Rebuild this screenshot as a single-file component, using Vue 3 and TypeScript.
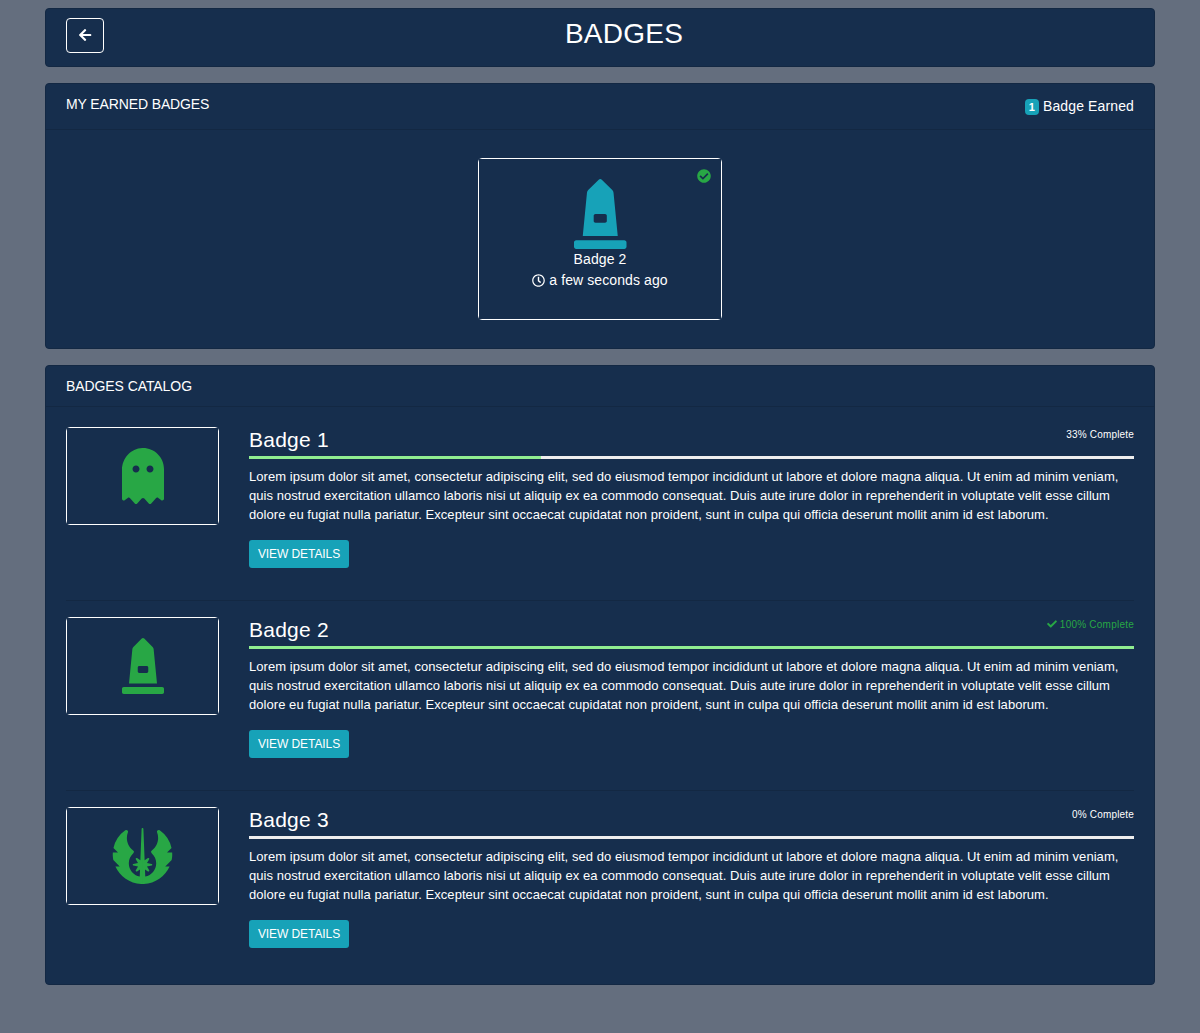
<script setup lang="ts">
interface Icon {
  width: number
  path: string
  mirrored?: boolean
}

interface Badge {
  name: string
  icon: Icon
  progress: number
}

const icons: Record<string, Icon> = {
  arrowLeft: {
    width: 448,
    path: 'M257.5 445.1l-22.2 22.2c-9.4 9.4-24.6 9.4-33.9 0L7 273c-9.4-9.4-9.4-24.6 0-33.9L201.4 44.7c9.4-9.4 24.6-9.4 33.9 0l22.2 22.2c9.5 9.5 9.3 25-.4 34.3L136.6 216H424c13.3 0 24 10.7 24 24v32c0 13.3-10.7 24-24 24H136.6l120.5 114.8c9.8 9.3 10 24.8.4 34.3z',
  },
  checkCircle: {
    width: 512,
    path: 'M504 256c0 136.967-111.033 248-248 248S8 392.967 8 256 119.033 8 256 8s248 111.033 248 248zM227.314 387.314l184-184c6.248-6.248 6.248-16.379 0-22.627l-22.627-22.627c-6.248-6.249-16.379-6.249-22.628 0L216 308.118l-70.059-70.059c-6.248-6.248-16.379-6.248-22.628 0l-22.627 22.627c-6.248 6.248-6.248 16.379 0 22.627l104 104c6.249 6.249 16.379 6.249 22.628.001z',
  },
  clock: {
    width: 512,
    path: 'M256 8C119 8 8 119 8 256s111 248 248 248 248-111 248-248S393 8 256 8zm0 448c-110.5 0-200-89.5-200-200S145.5 56 256 56s200 89.5 200 200-89.5 200-200 200zm61.8-104.4l-84.9-61.7c-3.1-2.3-4.9-5.9-4.9-9.7V116c0-6.6 5.4-12 12-12h32c6.6 0 12 5.4 12 12v141.7l66.8 48.6c5.4 3.9 6.5 11.4 2.6 16.8L334.6 349c-3.9 5.3-11.4 6.5-16.8 2.6z',
  },
  check: {
    width: 512,
    path: 'M173.898 439.404l-166.4-166.4c-9.997-9.997-9.997-26.206 0-36.204l36.203-36.204c9.997-9.998 26.207-9.998 36.204 0L192 312.69 432.095 72.596c9.997-9.997 26.207-9.997 36.204 0l36.203 36.204c9.997 9.997 9.997 26.206 0 36.204l-294.4 294.401c-9.998 9.997-26.207 9.997-36.204-.001z',
  },
  ghost: {
    width: 384,
    path: 'M186.1.09C81.01 3.24 0 94.92 0 200.05v263.92c0 14.26 17.23 21.39 27.31 11.31l24.92-18.53c6.66-4.95 16-3.99 21.51 2.21l42.95 48.35c6.25 6.25 16.38 6.25 22.63 0l40.72-45.85c6.37-7.17 17.56-7.17 23.92 0l40.72 45.85c6.25 6.25 16.38 6.25 22.63 0l42.95-48.35c5.51-6.2 14.85-7.17 21.51-2.21l24.92 18.53c10.08 10.08 27.31 2.94 27.31-11.31V192C384 84 294.83-3.17 186.1.09zM128 224c-17.67 0-32-14.33-32-32s14.33-32 32-32 32 14.33 32 32-14.33 32-32 32zm128 0c-17.67 0-32-14.33-32-32s14.33-32 32-32 32 14.33 32 32-14.33 32-32 32z',
  },
  monument: {
    width: 384,
    path: 'M368 448H16c-8.84 0-16 7.16-16 16v32c0 8.84 7.16 16 16 16h352c8.84 0 16-7.16 16-16v-32c0-8.84-7.16-16-16-16zm-78.86-347.26a31.97 31.97 0 0 0-9.21-19.44L203.31 4.69c-6.25-6.25-16.38-6.25-22.63 0l-76.6 76.61a31.97 31.97 0 0 0-9.21 19.44L64 416h256l-30.86-315.26zM240 307.2c0 6.4-6.4 12.8-12.8 12.8h-70.4c-6.4 0-12.8-6.4-12.8-12.8v-38.4c0-6.4 6.4-12.8 12.8-12.8h70.4c6.4 0 12.8 6.4 12.8 12.8v38.4z',
  },
  // Left half only; the right half is its reflection.
  jedi: {
    width: 576,
    mirrored: true,
    path: 'M292 512H288q-6.4 0-12.88-.3C171.16 506.94 81.26 442.23 40.01 352h39.93l-58.61-58.6a264.8 264.8 0 0 1-5.11-39.42 273.7 273.7 0 0 1 .5-29.98h47.22L22.55 182.63A269.8 269.8 0 0 1 130.51 20.55a16.06 16.06 0 0 1 9.28-3 16.36 16.36 0 0 1 13.5 7.25 16.03 16.03 0 0 1 1.63 15.09 138.4 138.4 0 0 0-9.84 51.27c0 45.1 21.04 86.57 57.72 113.73a16.3 16.3 0 0 1 1.2 25.39c-26.55 23.98-41.17 56.5-41.17 91.58 0 60.03 42.95 110.28 99.89 121.92l2.5-65.27L238.06 397a8.34 8.34 0 0 1-10-.75 8.02 8.02 0 0 1-1.39-9.94l20.12-33.76-42.06-8.73a7.99 7.99 0 0 1 0-15.66l42.06-8.72-20.11-33.73a7.99 7.99 0 0 1 11.36-10.72l30.4 20.65L279.95 7.67A7.97 7.97 0 0 1 288 0L292 2z',
  },
}

const description =
  'Lorem ipsum dolor sit amet, consectetur adipiscing elit, sed do eiusmod tempor incididunt ut labore et dolore magna aliqua. Ut enim ad minim veniam, quis nostrud exercitation ullamco laboris nisi ut aliquip ex ea commodo consequat. Duis aute irure dolor in reprehenderit in voluptate velit esse cillum dolore eu fugiat nulla pariatur. Excepteur sint occaecat cupidatat non proident, sunt in culpa qui officia deserunt mollit anim id est laborum.'

const badges: Badge[] = [
  { name: 'Badge 1', icon: icons.ghost, progress: 33 },
  { name: 'Badge 2', icon: icons.monument, progress: 100 },
  { name: 'Badge 3', icon: icons.jedi, progress: 0 },
]
</script>

<template>
  <main class="container">
    <header class="card title-bar">
      <button class="back" type="button" aria-label="Back">
        <svg class="icon" viewBox="0 0 448 512"><path :d="icons.arrowLeft.path" /></svg>
      </button>
      <h1>BADGES</h1>
    </header>

    <section class="card">
      <div class="card-header earned-header">
        <span>MY EARNED BADGES</span>
        <span class="count"><b class="pill">1</b>Badge Earned</span>
      </div>
      <div class="earned-body">
        <div class="earned-badge frame">
          <svg class="icon earned-check" viewBox="0 0 512 512"><path :d="icons.checkCircle.path" /></svg>
          <svg class="icon earned-icon" viewBox="0 0 384 512"><path :d="icons.monument.path" /></svg>
          <div>Badge 2</div>
          <div>
            <svg class="icon clock" viewBox="0 0 512 512"><path :d="icons.clock.path" /></svg> a few seconds ago
          </div>
        </div>
      </div>
    </section>

    <section class="card">
      <div class="card-header catalog-header">BADGES CATALOG</div>
      <div class="catalog">
        <article v-for="badge in badges" :key="badge.name" class="row">
          <div class="thumb frame">
            <svg class="icon" :viewBox="`0 0 ${badge.icon.width} 512`">
              <path :d="badge.icon.path" />
              <path v-if="badge.icon.mirrored" :d="badge.icon.path" transform="matrix(-1 0 0 1 576 0)" />
            </svg>
          </div>
          <div class="details">
            <div class="heading">
              <h2>{{ badge.name }}</h2>
              <span class="status" :class="{ done: badge.progress === 100 }">
                <svg v-if="badge.progress === 100" class="icon" viewBox="0 0 512 512"><path :d="icons.check.path" /></svg>
                {{ badge.progress }}% Complete
              </span>
            </div>
            <div class="progress"><div class="bar" :style="{ width: badge.progress + '%' }"></div></div>
            <p>{{ description }}</p>
            <button class="view" type="button">VIEW DETAILS</button>
          </div>
        </article>
      </div>
    </section>
  </main>
</template>

<style>
body {
  margin: 0;
  background: #646e7e;
}
</style>

<style scoped>
* {
  box-sizing: border-box;
}

.container {
  width: 1110px;
  margin: 0 auto;
  padding-top: 8px;
  color: #fff;
  font: 14px/21px "Liberation Sans", Arial, sans-serif;
}

.card {
  margin-bottom: 16px;
  background: #162e4d;
  border: 1px solid #132843;
  border-radius: 4px;
}

.icon {
  height: 1em;
  fill: currentColor;
  overflow: visible;
}

.title-bar {
  display: flex;
  height: 59px;
  padding: 9px 20px;
}

.back {
  display: flex;
  align-items: center;
  justify-content: center;
  width: 38px;
  height: 35px;
  padding: 0 0 2px;
  color: #fff;
  font-size: 14px;
  background: transparent;
  border: 1px solid #fff;
  border-radius: 4px;
}

h1 {
  flex: 1;
  margin: 0;
  padding-left: 10px;
  font-size: 28px;
  font-weight: 400;
  line-height: 32px;
  letter-spacing: 0.25px;
  text-align: center;
}

.card-header {
  height: 41px;
  padding: 10px 20px 9px;
  border-bottom: 1px solid #132843;
}

.catalog-header {
  letter-spacing: -0.08px;
}

.earned-header {
  display: flex;
  justify-content: space-between;
  height: 46px;
  letter-spacing: -0.12px;
}

.count {
  display: flex;
  gap: 4px;
  padding-top: 2px;
  letter-spacing: 0.13px;
}

.pill {
  width: 14px;
  height: 16px;
  margin-top: 3px;
  font-size: 11px;
  line-height: 17px;
  letter-spacing: 0;
  text-align: center;
  background: #17a2b8;
  border-radius: 4px;
}

.earned-body {
  display: flex;
  justify-content: center;
  padding: 28px 20px;
}

.frame {
  position: relative;
  isolation: isolate;
  border: 1px solid #fff;
  border-radius: 4px;
}

/* Square inner surface that trims the inside of the rounded outline. */
.frame::before {
  content: "";
  position: absolute;
  inset: 0;
  z-index: -1;
  background: #162e4d;
}

.earned-badge {
  width: 244px;
  height: 162px;
  padding-top: 20px;
  letter-spacing: 0.1px;
  text-align: center;
}

.earned-check {
  position: absolute;
  top: 10px;
  right: 10px;
  color: #28a745;
}

.earned-icon {
  display: block;
  height: 70px;
  margin: 0 auto;
  color: #17a2b8;
}

.clock {
  height: 13px;
  vertical-align: -1.5px;
}

.catalog {
  padding: 20px;
}

.row {
  display: flex;
  gap: 30px;
  height: 174px;
  border-bottom: 1px solid #132843;
}

.row + .row {
  margin-top: 16px;
}

.row:last-child {
  height: 157px;
  border-bottom: 0;
}

.thumb {
  display: flex;
  align-items: center;
  justify-content: center;
  width: 153px;
  height: 98px;
  color: #28a745;
  font-size: 56px;
}

.details {
  flex: 1;
}

.heading {
  display: flex;
  justify-content: space-between;
  height: 29px;
}

h2 {
  margin: 0;
  font-size: 21px;
  font-weight: 400;
  line-height: 25px;
  letter-spacing: 0.22px;
}

.status {
  font-size: 10px;
  line-height: 15px;
  letter-spacing: 0.18px;
}

.done {
  color: #28a745;
  letter-spacing: 0.23px;
}

.status .icon {
  vertical-align: -1px;
}

.progress {
  height: 3px;
  background: #eee;
}

.bar {
  height: 100%;
  background: #90ee90;
}

p {
  margin: 8px 0 16px;
  font-size: 13px;
  line-height: 19px;
  letter-spacing: 0.05px;
}

.view {
  display: block;
  width: 100px;
  height: 28px;
  padding: 0;
  color: #fff;
  font: 12px/18px "Liberation Sans", Arial, sans-serif;
  letter-spacing: -0.08px;
  background: #17a2b8;
  border: 0;
  border-radius: 3px;
}
</style>
